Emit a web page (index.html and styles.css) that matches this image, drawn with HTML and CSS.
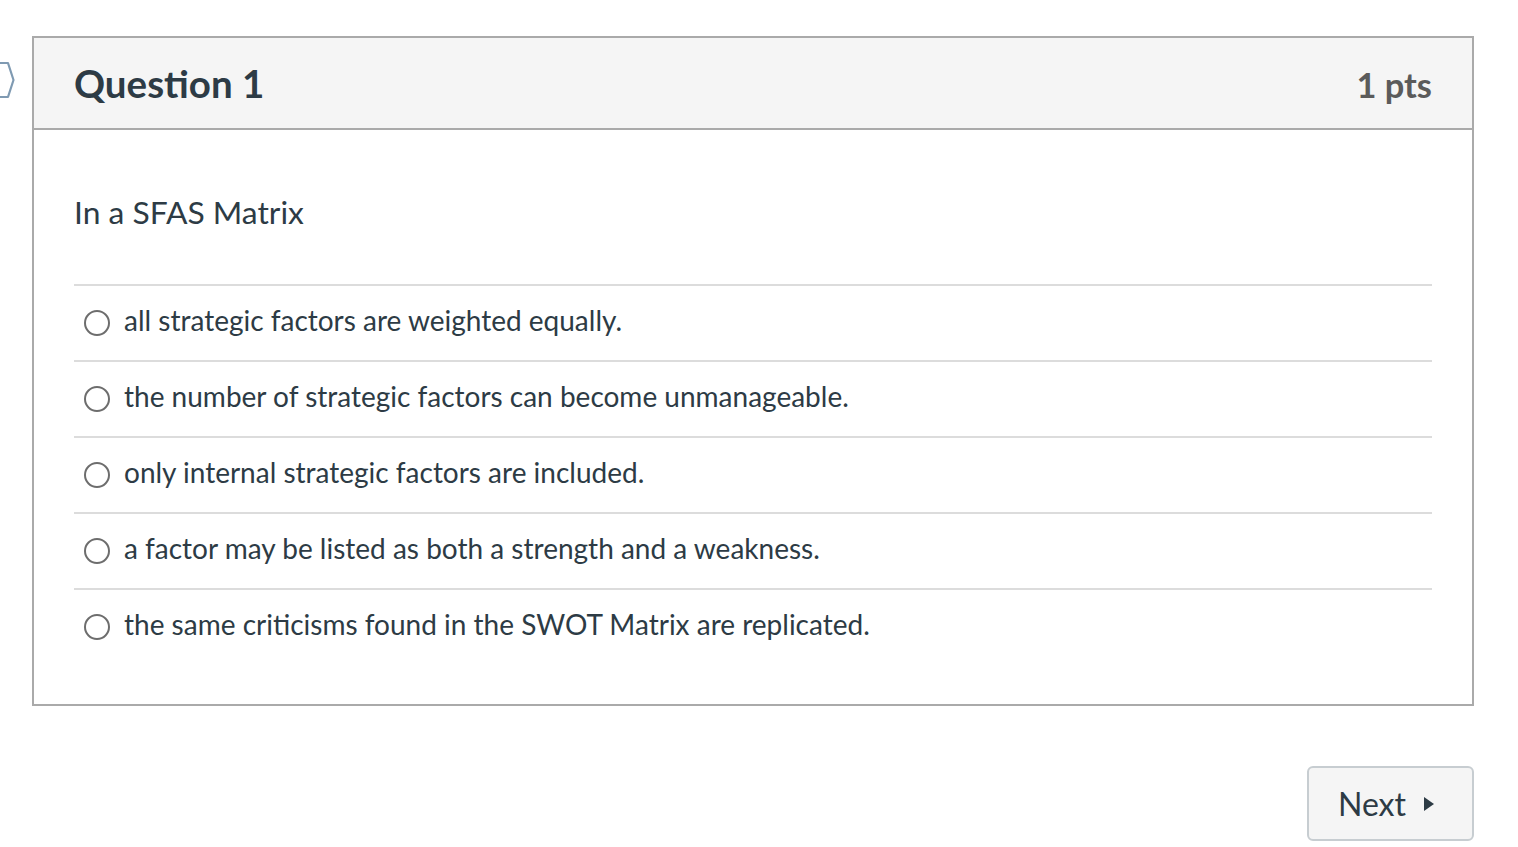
FILE: index.html
```html
<!DOCTYPE html>
<html>
<head>
<meta charset="utf-8">
<link rel="stylesheet" href="styles.css">
</head>
<body>
<div class="page">
  <svg class="flag" width="16" height="40" viewBox="0 0 16 40" aria-hidden="true">
    <path d="M-4 3 L8 3 L13.5 20 L8 37 L-4 37" fill="none" stroke="#7f9ab2" stroke-width="2.2" stroke-linejoin="round"/>
  </svg>
  <div class="card">
    <div class="card-header">
      <h2 class="q-title">Question 1</h2>
      <span class="q-pts">1 pts</span>
    </div>
    <div class="card-body">
      <p class="q-text">In a SFAS Matrix</p>
      <ul class="answers">
        <li class="answer"><span class="radio"></span><span class="answer-text">all strategic factors are weighted equally.</span></li>
        <li class="answer"><span class="radio"></span><span class="answer-text">the number of strategic factors can become unmanageable.</span></li>
        <li class="answer"><span class="radio"></span><span class="answer-text">only internal strategic factors are included.</span></li>
        <li class="answer"><span class="radio"></span><span class="answer-text">a factor may be listed as both a strength and a weakness.</span></li>
        <li class="answer"><span class="radio"></span><span class="answer-text">the same criticisms found in the SWOT Matrix are replicated.</span></li>
      </ul>
    </div>
  </div>
  <div class="actions">
    <button class="next-btn">Next <span class="tri"></span></button>
  </div>
</div>
</body>
</html>
```
FILE: styles.css
```css
html, body {
  margin: 0;
  padding: 0;
  background: #fff;
}
body {
  font-family: Lato, "Open Sans", "Liberation Sans", sans-serif;
  color: #2d3b45;
}
.page {
  position: relative;
  padding: 36px 44px 0 32px;
}
.flag {
  position: absolute;
  left: 0;
  top: 60px;
}
.card {
  border: 2px solid #aaaaaa;
  width: 1438px;
}
.card-header {
  background: #f5f5f5;
  border-bottom: 2px solid #aaaaaa;
  height: 90px;
  display: flex;
  align-items: center;
  justify-content: space-between;
  padding: 0 40px 0 40px;
}
.q-title {
  margin: 0;
  font-size: 38.5px;
  font-weight: 700;
  color: #2d3b45;
}
.q-pts {
  font-size: 34.4px;
  font-weight: 700;
  color: #5b5b5b;
  padding-top: 2px;
}
.card-body {
  padding: 0 40px 40px 40px;
}
.q-text {
  margin: 0;
  padding-top: 62px;
  height: 92px;
  font-size: 31.8px;
  line-height: 40px;
}
.answers {
  list-style: none;
  margin: 0;
  padding: 0;
}
.answer {
  display: flex;
  align-items: center;
  height: 74px;
  border-top: 2px solid #dcdcdc;
  padding-left: 10px;
}
.radio {
  width: 22px;
  height: 22px;
  border: 2px solid #6d6d6d;
  border-radius: 50%;
  flex: none;
  margin-right: 14px;
  margin-top: -1px;
}
.answer-text {
  font-size: 28px;
  margin-top: -6px;
}
.actions {
  display: flex;
  justify-content: flex-end;
  padding-top: 60px;
  width: 1442px;
}
.next-btn {
  width: 167px;
  height: 75px;
  background: #f5f5f5;
  border: 2px solid #c7cdd1;
  border-radius: 6px;
  font-family: Lato, "Open Sans", "Liberation Sans", sans-serif;
  font-size: 32px;
  color: #2d3b45;
  display: flex;
  align-items: center;
  justify-content: flex-start;
  gap: 18px;
  padding: 0 0 0 29px;
}
.tri {
  width: 0;
  height: 0;
  border-top: 7px solid transparent;
  border-bottom: 7px solid transparent;
  border-left: 10px solid #2d3b45;
}
```
